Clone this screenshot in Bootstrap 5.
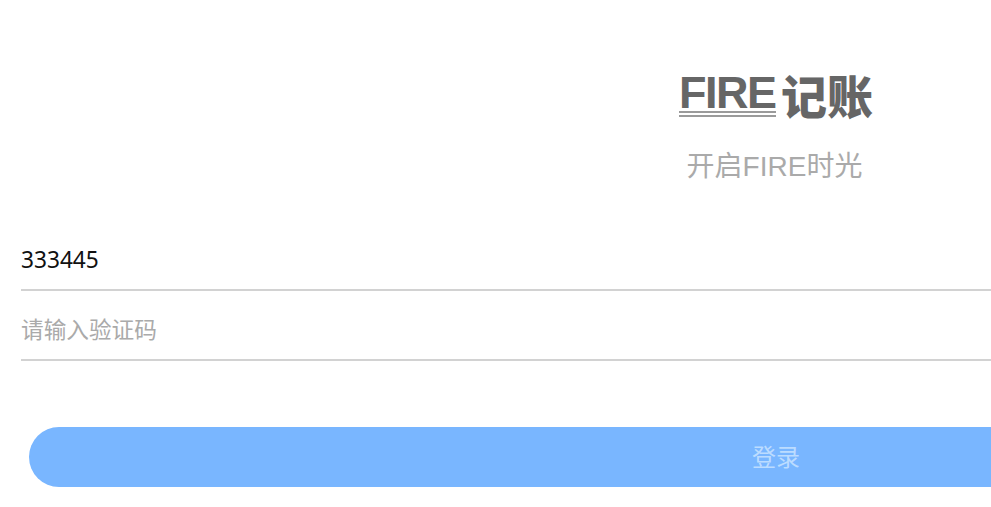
<!DOCTYPE html>
<html lang="zh">
<head>
<meta charset="utf-8">
<title>FIRE记账</title>
<link href="https://cdn.jsdelivr.net/npm/bootstrap@5.3.0/dist/css/bootstrap.min.css" rel="stylesheet">
<style>
html,body{margin:0;height:100%;overflow:hidden;background:#fff}
.stage{width:1550px;height:507px;overflow:hidden;font-family:"Noto Sans","Noto Sans CJK SC",sans-serif}
.brand-row{padding-top:69px;height:140px}
.logo-fire{display:block;width:97px;height:48px;margin-left:2px;font:700 45px/36px "Liberation Sans",sans-serif;color:#666;letter-spacing:-1.5px;padding-top:6px;border-bottom:6px double #9a9a9a;white-space:nowrap}
.logo-cn{font:900 46px/50px "Noto Sans CJK SC",sans-serif;color:#666;margin-left:5px;white-space:nowrap}
.slogan{font:400 28px/40px "Liberation Sans","Noto Sans CJK SC",sans-serif;color:#aaa;margin-top:7px;padding-right:1px}
.fields{padding:0 21px;margin-top:34px}
.field-in{display:block;width:100%;height:70px;padding:8px 0 0;border:0;border-bottom:2px solid #d2d2d2;background:none;outline:0;font-size:22.67px;color:#111;border-radius:0;box-shadow:none}
.field-in::placeholder{color:#aaa}
.login-btn{display:block;width:1492px;height:60px;margin:66px 0 0 29px;border:0;border-radius:30px;background:#79b6ff;color:#bcdcff;font-size:24px;line-height:60px;padding:0 0 0 2px}
</style>
</head>
<body>
<div class="stage">
  <div class="brand-row d-flex justify-content-center align-items-start">
    <span class="logo-fire">FIRE</span><span class="logo-cn">记账</span>
  </div>
  <div class="slogan text-center">开启FIRE时光</div>
  <form class="fields">
    <input class="field-in" type="text" value="333445">
    <input class="field-in" type="text" placeholder="请输入验证码">
  </form>
  <button class="login-btn btn" type="button">登录</button>
</div>
<script src="https://cdn.jsdelivr.net/npm/bootstrap@5.3.0/dist/js/bootstrap.bundle.min.js"></script>
</body>
</html>
